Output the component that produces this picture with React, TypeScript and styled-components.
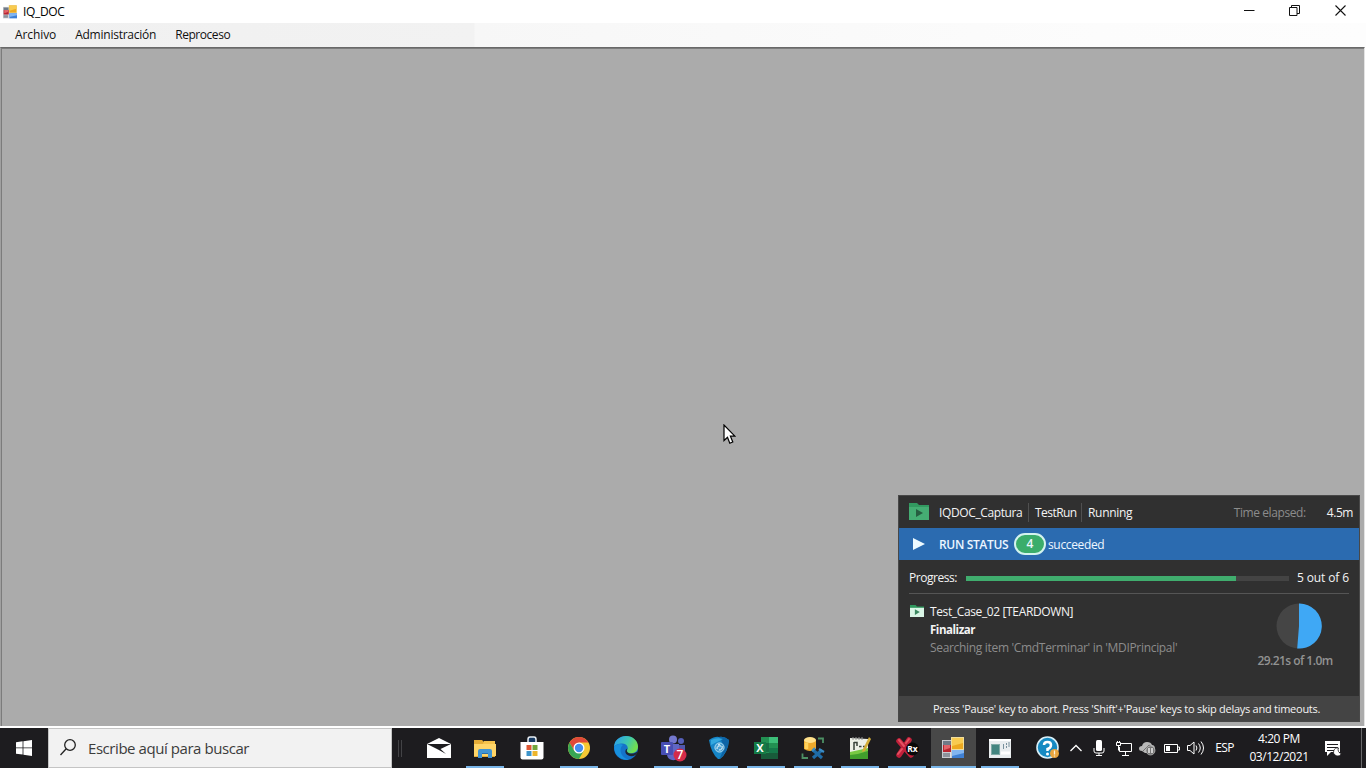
import React from "react";
import styled, { createGlobalStyle } from "styled-components";

const Global = createGlobalStyle`
  * { box-sizing: border-box; }
  html, body { margin: 0; padding: 0; overflow: hidden; }
  body { font-family: "Open Sans", "Noto Sans", sans-serif; }
  svg { display: block; flex: none; }
`;

const Screen = styled.div`
  position: relative;
  width: 1366px;
  height: 768px;
  display: flex;
  flex-direction: column;
  background: #fff;
  overflow: hidden;
`;

const Label = styled.span<{ $size?: number; $track?: number; $color?: string; $weight?: number }>`
  font-size: ${(p) => p.$size ?? 12}px;
  letter-spacing: ${(p) => p.$track ?? 0}px;
  color: ${(p) => p.$color ?? "inherit"};
  font-weight: ${(p) => p.$weight ?? 400};
  line-height: 16px;
  white-space: nowrap;
`;

const TitleBar = styled.header`
  height: 23px;
  display: flex;
  align-items: center;
  padding: 0 0 0 3px;
  color: #000;
  background: #fff;
`;

const TitleText = styled.div`
  flex: 1;
  display: flex;
  padding: 0 0 0 6px;
`;

const WindowButtons = styled.div`
  display: flex;
  padding-bottom: 3px;
`;

const WindowButton = styled.div<{ $w: number }>`
  width: ${(p) => p.$w}px;
  height: 20px;
  display: flex;
  align-items: center;
  justify-content: center;
`;

const MenuBar = styled.nav`
  height: 24px;
  display: flex;
  align-items: center;
  gap: 19px;
  padding: 0 0 1px 15px;
  color: #111;
  background: linear-gradient(90deg, #f0f0f0 0, #f2f2f2 474px, #f7f7f7 475px, #fcfcfc 1100px, #fdfdfd 100%);
`;

const Client = styled.main`
  flex: none;
  height: 679px;
  margin-right: 1px;
  display: flex;
  align-items: flex-end;
  justify-content: flex-end;
  padding: 0 4px 4px 0;
  background: #ababab;
  border-top: 1px solid #696969;
  border-left: 1px solid #a0a0a0;
  border-right: 1px solid #e3e3e3;
  box-shadow: inset 1px 1px 0 #7c7c7c;
`;

const Panel = styled.section`
  width: 462px;
  height: 227px;
  display: flex;
  flex-direction: column;
  background: #303030;
  border: 1px solid #484848;
  color: #f4f4f4;
`;

const PanelHead = styled.div`
  height: 32px;
  display: flex;
  align-items: center;
  padding: 1px 6px 0 10px;
  & > svg { margin-top: -2px; }
`;

const Crumbs = styled.div`
  flex: 1;
  display: flex;
  align-items: center;
  margin-left: 10px;
`;

const Crumb = styled.div<{ $w: number }>`
  width: ${(p) => p.$w}px;
  height: 19px;
  display: flex;
  align-items: center;
  & + & { border-left: 1px solid #505050; padding-left: 6px; }
`;

const Elapsed = styled.div`
  display: flex;
  gap: 21px;
`;

const StatusBar = styled.div`
  height: 32px;
  display: flex;
  align-items: center;
  padding-left: 14px;
  background: #2b6bb0;
  color: #edf6ff;
`;

const StatusText = styled.div`
  width: 75px;
  margin-left: 14px;
  padding-top: 1px;
  display: flex;
`;

const StatusNote = styled.div`
  padding-top: 1px;
  display: flex;
`;

const CountPill = styled.div`
  width: 32px;
  height: 22px;
  display: flex;
  align-items: center;
  justify-content: center;
  margin-right: 2px;
  background: #3bad6b;
  border: 2px solid #d4f3ee;
  border-radius: 11px;
`;

const ProgressRow = styled.div`
  height: 34px;
  margin: 0 10px;
  display: flex;
  align-items: center;
  padding-top: 2px;
  border-bottom: 1px solid #555;
`;

const ProgressLabel = styled.div`
  width: 57px;
  display: flex;
`;

const Track = styled.div`
  width: 323px;
  height: 5px;
  margin: 1px 8px 0 0;
  background: #444;
`;

const Fill = styled.div`
  height: 100%;
  background: #40ad6e;
`;

const CaseRow = styled.div`
  height: 102px;
  display: flex;
  padding: 9px 18px 0 11px;
  & > svg { margin-top: 2px; }
`;

const CaseText = styled.div`
  flex: 1;
  display: flex;
  flex-direction: column;
  gap: 2px;
  margin-left: 6px;
  padding-top: 1px;
`;

const Timer = styled.div`
  width: 92px;
  display: flex;
  flex-direction: column;
  align-items: center;
  gap: 4px;
  & > svg { margin-left: 8px; }
`;

const PanelFoot = styled.div`
  flex: 1;
  display: flex;
  align-items: center;
  padding: 1px 0 0 34px;
  background: #444;
`;

const Taskbar = styled.footer`
  height: 40px;
  margin-top: 2px;
  display: flex;
  background: #1d1c1f;
  color: #fff;
`;

const StartButton = styled.div`
  width: 48px;
  display: flex;
  align-items: center;
  justify-content: center;
`;

const SearchBox = styled.div`
  width: 344px;
  display: flex;
  align-items: center;
  gap: 12px;
  padding: 0 0 1px 11px;
  background: #f2f2f2;
  border: 1px solid #c4c4c4;
  color: #3c3c3c;
`;

const Grip = styled.div`
  width: 4px;
  height: 17px;
  margin: 12px 13.3px 0 6px;
  border: solid #434346;
  border-width: 0 1px;
`;

const Apps = styled.div`
  width: 608.4px;
  display: flex;
`;

const AppCell = styled.div<{ $open?: boolean; $active?: boolean }>`
  position: relative;
  flex: 1;
  display: flex;
  flex-direction: column;
  align-items: center;
  justify-content: center;
  background: linear-gradient(#484848, #484848) center / ${(p) => (p.$active ? "45px 100%" : "0 0")} no-repeat;
  &::after {
    content: "";
    position: absolute;
    bottom: 0;
    display: ${(p) => (p.$open ? "block" : "none")};
    width: ${(p) => (p.$active ? 45 : 38)}px;
    height: 2px;
    background: #79b5e8;
  }
`;

const Tray = styled.div`
  flex: 1;
  display: flex;
  align-items: center;
  padding-left: 11.3px;
`;

const TraySlot = styled.div<{ $w: number }>`
  width: ${(p) => p.$w}px;
  display: flex;
  align-items: center;
  justify-content: center;
`;

const Clock = styled.div`
  width: 72px;
  display: flex;
  flex-direction: column;
  align-items: center;
  gap: 2px;
  padding-bottom: 1px;
`;

const ShowDesktop = styled.div`
  width: 5px;
  height: 40px;
  margin-left: auto;
  border-left: 1px solid #68686a;
`;

const Pointer = styled.svg`
  position: absolute;
  left: 723px;
  top: 424px;
`;

const FormIcon = ({ size }: { size: number }) => (
  <svg width={size} height={size} viewBox="0 0 22 22">
    <path d="M0 3h10v18H0z" fill="#c9cbd0" />
    <path d="M1 4h8v4H1z" fill="#6f7a88" />
    <path d="M9 0h13v13H9z" fill="#f0dd9c" />
    <path d="M10 1h11v11H10z" fill="#eda920" />
    <path d="M10 1h11v5l-11 3z" fill="#f8cb50" />
    <path d="M1 8h8v7H1z" fill="#b92531" />
    <path d="M2 8h6v3l-6 2z" fill="#e2646a" />
    <path d="M10 13h12v8H10z" fill="#3f80d4" />
    <path d="M10 13h12v3l-12 3z" fill="#82b5f0" />
    <path d="M1 16h7v4H1z" fill="#8d939c" />
    <path d="M8.500 15v6" stroke="#dfe3e8" />
  </svg>
);

const Folder = ({ w, h, fill, top, arrow }: { w: number; h: number; fill: string; top: string; arrow: string }) => (
  <svg width={w} height={h} viewBox="0 0 20 17" preserveAspectRatio="none">
    <path d="M0 0h8l2 2h10v15H0z" fill={top} />
    <path d="M0 4h20v13H0z" fill={fill} />
    <path d="M7 6l7 4-7 4z" fill={arrow} />
  </svg>
);

const StartIcon = () => (
  <svg width="16" height="16" viewBox="0 0 16 16" fill="#fff">
    <path d="M0 2.2l6.6-.9v6.2H0zM7.4 1.2L16 0v7.5H7.4zM0 8.3h6.6v6.3L0 13.7zM7.4 8.3H16V16l-8.6-1.2z" />
  </svg>
);

const MailIcon = () => (
  <svg width="24" height="20" viewBox="0 0 24 20">
    <path d="M0 6L12 0l12 6v14H0z" fill="#fff" />
    <path d="M0 6h24l-10.500 5L19 16 11 11.600z" fill="#1d1c1f" />
  </svg>
);

const ExplorerIcon = () => (
  <svg width="22" height="19" viewBox="0 0 22 19">
    <path d="M0 1h8l2 2h11v15H0z" fill="#e6ad38" />
    <path d="M0 5h22v12H0z" fill="#ffd568" />
    <path d="M10 2h11v3H9z" fill="#f6c34c" />
    <path d="M4 12q0-2 2-2h10q2 0 2 2v7h-4v-4H8v4H4z" fill="#4194d2" />
    <path d="M8 14h6v1H8z" fill="#2b6da5" />
  </svg>
);

const StoreIcon = () => (
  <svg width="24" height="24" viewBox="0 0 24 24">
    <path d="M8 6V3.500Q8 1 10 1h4q2 0 2 2.500V6" fill="#173b64" stroke="#e8eef4" strokeWidth="1.500" />
    <path d="M0.500 6h23v15.500q0 2-2 2h-19q-2 0-2-2z" fill="#fff" />
    <path d="M6.500 9h5v5h-5z" fill="#df5734" />
    <path d="M12.500 9h5v5h-5z" fill="#73a63c" />
    <path d="M6.500 15h5v5h-5z" fill="#3c94ca" />
    <path d="M12.500 15h5v5h-5z" fill="#edb52d" />
  </svg>
);

const ChromeIcon = () => (
  <svg width="22" height="22" viewBox="0 0 22 22">
    <circle cx="11" cy="11" r="11" fill="#f6c934" />
    <path d="M1.500 5.500A11 11 0 0 1 20.500 5.500H11L6.240 13.700z" fill="#df4939" />
    <path d="M1.500 5.500A11 11 0 0 0 11 22l4.760-8.250H6.240z" fill="#37a553" />
    <circle cx="11" cy="11" r="5.500" fill="#fff" />
    <circle cx="11" cy="11" r="4.200" fill="#438df0" />
  </svg>
);

const EdgeIcon = () => (
  <svg width="24" height="24" viewBox="0 0 24 24">
    <defs>
      <linearGradient id="edgeTop" x1="0" y1="0" x2="1" y2="0.4">
        <stop offset="0.2" stopColor="#2fa8df" />
        <stop offset="0.6" stopColor="#3fc8ad" />
        <stop offset="1" stopColor="#71df50" />
      </linearGradient>
    </defs>
    <circle cx="12" cy="12" r="12" fill="#1573c9" />
    <path d="M0.200 11C0 4 6 0 12 0c7 0 12 5 12 10.500 0 5-4 7-8 7-3 0-4-1.500-3-3 2-3 0-7-4.500-7C4 7.500 1 9 .2 11z" fill="url(#edgeTop)" />
    <path d="M9 9c-5 4-2 13 6 14.500C8 25 0 20 .2 11 2 8 6 7 9 9z" fill="#1890dd" />
    <path d="M13.500 12.500c-1.500 2-.5 4.500 3 5 3 .3 5.200-.7 7-2 .3 1-.8 2.500-2 3.500-2.500 1.500-5 1.500-7 .5-4-1.500-4-6-1-7z" fill="#1d2633" />
  </svg>
);

const TeamsIcon = () => (
  <svg width="28" height="27" viewBox="0 0 28 27">
    <circle cx="14" cy="4.500" r="4" fill="#7478cf" />
    <circle cx="22" cy="6" r="3" fill="#5660ba" />
    <path d="M18 10h8v8q-1 5-8 5z" fill="#5158ad" />
    <path d="M8 9h12v10q-1 7-7 6-5-1-5-6z" fill="#6066c4" />
    <rect x="2" y="7" width="12" height="13" rx="1" fill="#484eb3" />
    <text x="8" y="17.500" fill="#fff" fontSize="11" fontWeight="700" textAnchor="middle">T</text>
    <circle cx="21" cy="20" r="6.500" fill="#d42b49" />
    <text x="21" y="24.300" fill="#fff" fontSize="12" fontWeight="600" textAnchor="middle">7</text>
  </svg>
);

const ShieldIcon = () => (
  <svg width="22" height="24" viewBox="0 0 22 24">
    <path d="M1 4Q7 0 11 1q5-1 10 3-1 13-9 19H10Q3 17 1 4z" fill="#1685c7" />
    <path d="M11 1q5-1 10 3-1 13-10 19 8-12 0-22z" fill="#0d64a7" />
    <path d="M3 4q6-3 12-1L3 9z" fill="#34a8df" />
    <circle cx="11.500" cy="11.500" r="4.600" fill="#4aa0d2" stroke="#b3def5" />
    <path d="M9 13q0-4 4-3M11 14q4 0 3-4M10 9l2-1" fill="none" stroke="#ecf8ff" />
  </svg>
);

const ExcelIcon = () => (
  <svg width="24" height="22" viewBox="0 0 24 22">
    <path d="M7 0h17v22H7z" fill="#229052" />
    <path d="M15 0h9v6h-9z" fill="#3dbe79" />
    <path d="M7 6h8v9H7z" fill="#176d43" />
    <path d="M15 11h9v5h-9z" fill="#15794a" />
    <path d="M7 16h17v6H7z" fill="#185b3a" />
    <path d="M0 5h12v12H0z" fill="#147b46" />
    <text x="6" y="15" fill="#fff" fontSize="11" fontWeight="700" textAnchor="middle">X</text>
  </svg>
);

const DatabaseIcon = () => (
  <svg width="24" height="24" viewBox="0 0 24 24">
    <path d="M3 4v9q6 4 12 0V4z" fill="#eda92b" />
    <ellipse cx="9" cy="4" rx="6" ry="3" fill="#ffe08a" />
    <path d="M5.500 6.500v6.500" stroke="#ffd15b" strokeWidth="3.500" />
    <path d="M17 2.500h5V7M1.500 17.500V22H7" fill="none" stroke="#4d9064" strokeWidth="1.800" />
    <path d="M12 14l9 8M12 22l9-8" stroke="#1f6ca8" strokeWidth="3.200" />
    <path d="M18 13l5 3M11 15l3-3" stroke="#3a8cc6" strokeWidth="2.200" />
  </svg>
);

const NotepadIcon = () => (
  <svg width="22" height="24" viewBox="0 0 22 24">
    <path d="M1 2l18 1v20H1z" fill="#edf0e7" />
    <path d="M1 16q9-2 18-4v11H1z" fill="#79c943" />
    <path d="M1 19q10-1 18-4v8H1z" fill="#419f2c" />
    <path d="M5 6v8M5 6.500h3V10M10 10.500h2.500M14 10.500h2.500" fill="none" stroke="#39423a" strokeWidth="1.500" />
    <path d="M4 1v3M7 1v3M10 1v3M13 1v3" stroke="#999" />
    <path d="M20 1l2 2-6 12-3 1 1-3z" fill="#d3ad38" />
  </svg>
);

const RxIcon = () => (
  <svg width="24" height="22" viewBox="0 0 24 22">
    <path d="M4 4l12 14M14 3L4 18" stroke="#c0203a" strokeWidth="5.500" strokeLinecap="round" />
    <path d="M4 3l5 6M14 2l-3 4M3 17l4-5" stroke="#e55162" strokeWidth="2" strokeLinecap="round" />
    <circle cx="17.500" cy="12" r="6.500" fill="#080808" />
    <text x="17.500" y="15.200" fill="#fff" fontSize="8.500" fontWeight="700" textAnchor="middle">Rx</text>
  </svg>
);

const WindowAppIcon = () => (
  <svg width="22" height="20" viewBox="0 0 22 20">
    <path d="M0 1h22v19H0z" fill="#e9edef" />
    <path d="M0 1h22v2H0z" fill="#fff" />
    <path d="M2 6h9v11H2z" fill="#7fa9a5" />
    <path d="M3 7h7v9H3z" fill="#438580" />
    <path d="M14.500 6v5M17.500 5v2M17.500 8v2M20 4v5" stroke="#78909c" />
    <path d="M12 15h9" stroke="#fff" strokeWidth="3" />
  </svg>
);

const HelpIcon = () => (
  <svg width="24" height="24" viewBox="0 0 24 24">
    <circle cx="11.500" cy="11.500" r="10.500" fill="#168ac2" stroke="#d9eff8" strokeWidth="1.600" />
    <path d="M8 9q0-3 3.500-3T15 9t-3.500 4v2" fill="none" stroke="#fff" strokeWidth="2.500" />
    <circle cx="11.500" cy="18" r="1.500" fill="#fff" />
    <circle cx="18.500" cy="17.500" r="4.500" fill="#e9a43d" />
    <path d="M18.500 14.500v4M18.500 19.500v1" stroke="#fff3d8" strokeWidth="1.300" />
  </svg>
);

const ChevronIcon = () => (
  <svg width="12" height="8" viewBox="0 0 12 8">
    <path d="M.5 7L6 1.500 11.500 7" fill="none" stroke="#fff" strokeWidth="1.300" />
  </svg>
);

const MicIcon = () => (
  <svg width="12" height="16" viewBox="0 0 12 16">
    <rect x="3" y="0" width="6" height="11" rx="1.500" fill="#fff" />
    <path d="M1 8v3q0 2 2 2h6q2 0 2-2V8M6 13v3M3 15.500h6" fill="none" stroke="#fff" />
  </svg>
);

const NetworkIcon = () => (
  <svg width="17" height="15" viewBox="0 0 17 15" fill="none" stroke="#fff">
    <path d="M6 2.500h10.500v8H4.500V6M10.500 10.500v4M7 14.500h7" />
    <path d="M1.500 1.500h4v3h-4zM3.500 4.500v5M2.500 0v2M4.500 0v2" />
  </svg>
);

const CloudIcon = () => (
  <svg width="17" height="16" viewBox="0 0 17 16">
    <path d="M3 11Q0 11 0 8.500T3 6q1-4 5-4t5 3q3 0 3 4t-3 4H6z" fill="#b8b8b8" />
    <path d="M4 11l6-6 3 2" fill="none" stroke="#707070" />
    <circle cx="11.500" cy="10.500" r="4.500" fill="#777" stroke="#bbb" strokeWidth=".7" />
    <path d="M10 8v5M13 8v5" stroke="#fff" strokeWidth="1.300" />
  </svg>
);

const BatteryIcon = () => (
  <svg width="16" height="9" viewBox="0 0 16 9">
    <path d="M.5.500h13v8H.500zM14 3h1.500v3H14" fill="none" stroke="#fff" />
    <path d="M2 2h4v5H2z" fill="#fff" />
  </svg>
);

const SpeakerIcon = () => (
  <svg width="17" height="14" viewBox="0 0 17 14" fill="none" stroke="#fff">
    <path d="M.5 4.500H3l4-3.500v12L3 9.500H.500zM9 4.500q1.800 2.500 0 5M11.500 2.500q3.500 4.500 0 9M14 .500q5 6.500 0 13" />
  </svg>
);

const NotificationIcon = () => (
  <svg width="18" height="17" viewBox="0 0 18 17">
    <path d="M1 1h15v11H7l-4 4v-4H1z" fill="#fff" />
    <path d="M3 4.500h11M3 7.500h11M3 10.500h7" stroke="#1d1c1f" />
    <path d="M14.500 8a4 4 0 1 0 2.800 5.500 3.800 3.800 0 0 1-2.800-5.500z" fill="#fff" stroke="#1d1c1f" strokeWidth=".8" />
  </svg>
);

const apps = [
  { name: "mail", icon: <MailIcon /> },
  { name: "explorer", icon: <ExplorerIcon />, open: true },
  { name: "store", icon: <StoreIcon /> },
  { name: "chrome", icon: <ChromeIcon />, open: true },
  { name: "edge", icon: <EdgeIcon /> },
  { name: "teams", icon: <TeamsIcon />, open: true },
  { name: "shield", icon: <ShieldIcon />, open: true },
  { name: "excel", icon: <ExcelIcon />, open: true },
  { name: "database", icon: <DatabaseIcon />, open: true },
  { name: "notepad", icon: <NotepadIcon />, open: true },
  { name: "rx", icon: <RxIcon />, open: true },
  { name: "form", icon: <FormIcon size={22} />, open: true, active: true },
  { name: "window", icon: <WindowAppIcon />, open: true },
];

const progress = 270 / 323;

export default function App() {
  return (
    <Screen>
      <Global />
      <TitleBar>
        <FormIcon size={14} />
        <TitleText><Label $track={-0.35}>IQ_DOC</Label></TitleText>
        <WindowButtons>
          <WindowButton $w={48}>
            <svg width="11" height="11"><path d="M0 5.500h10.500" stroke="#111" /></svg>
          </WindowButton>
          <WindowButton $w={42}>
            <svg width="11" height="11" fill="none" stroke="#111">
              <path d="M.5 2.500h7.500v8H.500zM2.500 2.500v-2h8v8H8" />
            </svg>
          </WindowButton>
          <WindowButton $w={51}>
            <svg width="11" height="11"><path d="M.5.500l10 10M10.500.500l-10 10" stroke="#111" strokeWidth="1.100" /></svg>
          </WindowButton>
        </WindowButtons>
      </TitleBar>
      <MenuBar>
        <Label $track={-0.1}>Archivo</Label>
        <Label $track={-0.24}>Administración</Label>
        <Label $track={-0.45}>Reproceso</Label>
      </MenuBar>
      <Client>
        <Panel>
          <PanelHead>
            <Folder w={20} h={17} fill="#45ad73" top="#329960" arrow="#265d40" />
            <Crumbs>
              <Crumb $w={89}><Label $track={-0.38}>IQDOC_Captura</Label></Crumb>
              <Crumb $w={53}><Label $track={-0.55}>TestRun</Label></Crumb>
              <Crumb $w={60}><Label $track={-0.3}>Running</Label></Crumb>
            </Crumbs>
            <Elapsed>
              <Label $color="#8c8c8c" $track={-0.4}>Time elapsed:</Label>
              <Label $track={-0.45}>4.5m</Label>
            </Elapsed>
          </PanelHead>
          <StatusBar>
            <svg width="12" height="12"><path d="M0 0l12 6-12 6z" fill="#edfaff" /></svg>
            <StatusText><Label $weight={600} $track={-0.35}>RUN STATUS</Label></StatusText>
            <CountPill><Label $weight={600}>4</Label></CountPill>
            <StatusNote><Label $track={-0.35}>succeeded</Label></StatusNote>
          </StatusBar>
          <ProgressRow>
            <ProgressLabel><Label $track={-0.45}>Progress:</Label></ProgressLabel>
            <Track><Fill style={{ width: `${progress * 100}%` }} /></Track>
            <Label $track={-0.12}>5 out of 6</Label>
          </ProgressRow>
          <CaseRow>
            <Folder w={14} h={12} fill="#d9f5e5" top="#2e965c" arrow="#3b8860" />
            <CaseText>
              <Label $track={-0.37}>Test_Case_02 [TEARDOWN]</Label>
              <Label $size={11.5} $track={-0.45} $weight={700}>Finalizar</Label>
              <Label $track={-0.32} $color="#8c8c8c">Searching item 'CmdTerminar' in 'MDIPrincipal'</Label>
            </CaseText>
            <Timer>
              <svg width="46" height="46" viewBox="0 0 46 46">
                <circle cx="23" cy="23" r="22.500" fill="#454545" />
                <path d="M23 .5A22.500 22.500 0 1 1 21.200 45.400L23 23z" fill="#3fa8f5" />
              </svg>
              <Label $weight={600} $track={-0.55} $color="#929292">29.21s of 1.0m</Label>
            </Timer>
          </CaseRow>
          <PanelFoot>
            <Label $size={11} $track={-0.26}>Press 'Pause' key to abort. Press 'Shift'+'Pause' keys to skip delays and timeouts.</Label>
          </PanelFoot>
        </Panel>
      </Client>
      <Taskbar>
        <StartButton><StartIcon /></StartButton>
        <SearchBox>
          <svg width="16" height="17" viewBox="0 0 16 17" fill="none" stroke="#222" strokeWidth="1.300">
            <circle cx="10" cy="6" r="5.300" /><path d="M6.200 9.800L.5 16" />
          </svg>
          <Label $size={15} $track={-0.44}>Escribe aquí para buscar</Label>
        </SearchBox>
        <Grip />
        <Apps>
          {apps.map((a) => (
            <AppCell key={a.name} $open={a.open} $active={a.active}>{a.icon}</AppCell>
          ))}
        </Apps>
        <Tray>
          <TraySlot $w={27}><HelpIcon /></TraySlot>
          <TraySlot $w={28}><ChevronIcon /></TraySlot>
          <TraySlot $w={19}><MicIcon /></TraySlot>
          <TraySlot $w={29}><NetworkIcon /></TraySlot>
          <TraySlot $w={20}><CloudIcon /></TraySlot>
          <TraySlot $w={28}><BatteryIcon /></TraySlot>
          <TraySlot $w={20}><SpeakerIcon /></TraySlot>
          <TraySlot $w={37}><Label $track={-0.6}>ESP</Label></TraySlot>
          <Clock>
            <Label $track={-0.4}>4:20 PM</Label>
            <Label $track={-0.45}>03/12/2021</Label>
          </Clock>
          <TraySlot $w={36}><NotificationIcon /></TraySlot>
          <ShowDesktop />
        </Tray>
      </Taskbar>
      <Pointer width="13" height="21" viewBox="0 0 13 21">
        <path d="M1 1v15.500l3.500-3.300 2.300 6 3-1.200-2.400-5.800h4.500z" fill="#fff" stroke="#000" strokeWidth="1.200" />
      </Pointer>
    </Screen>
  );
}
